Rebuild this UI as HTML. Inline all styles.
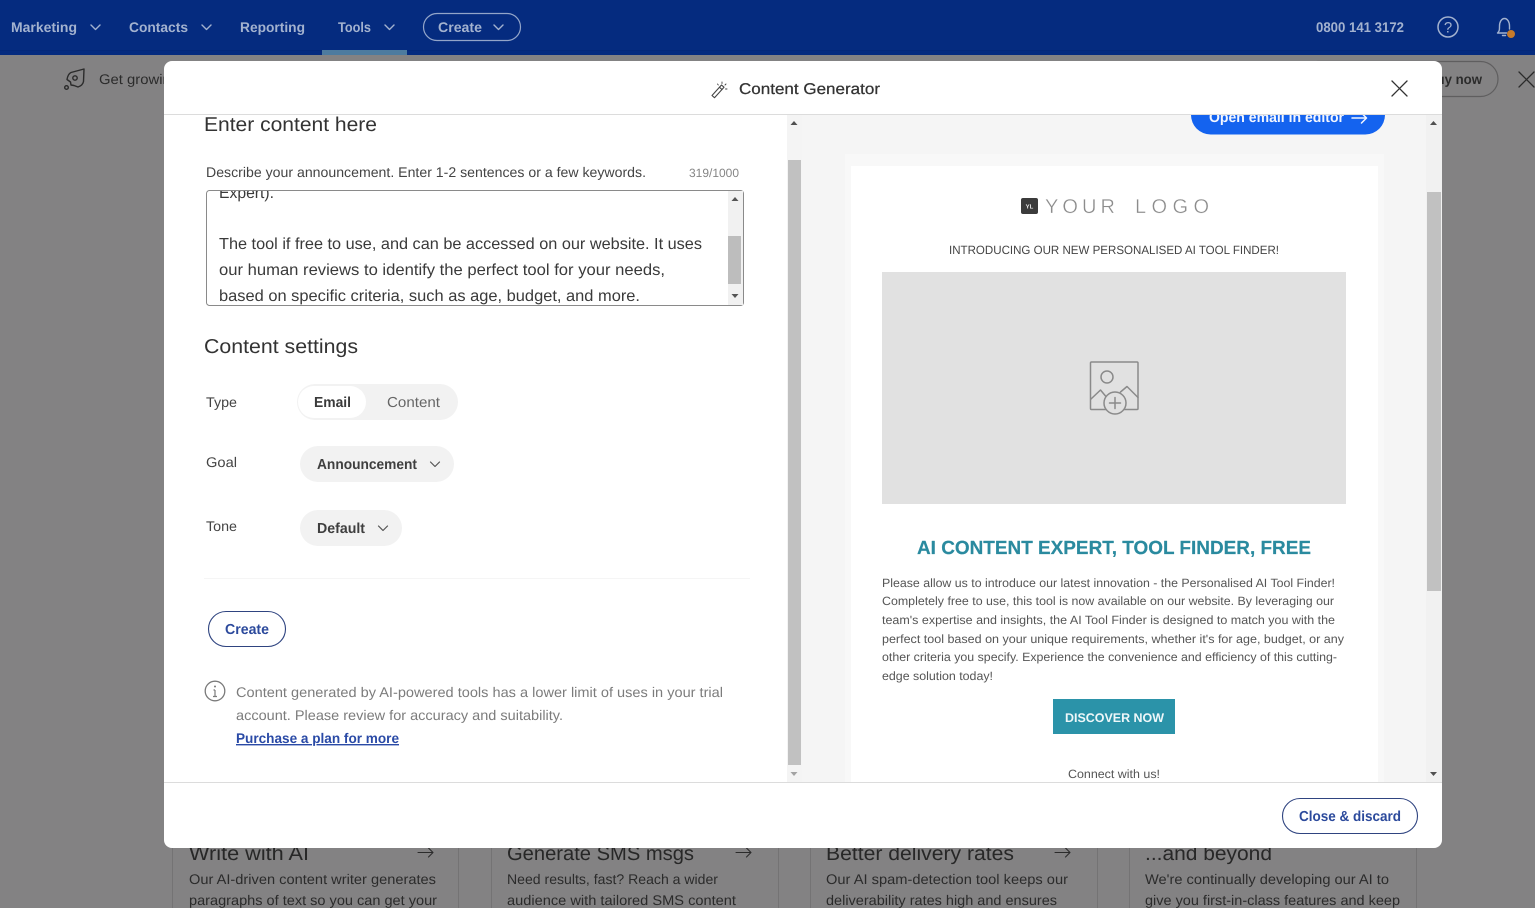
<!DOCTYPE html>
<html lang="en">
<head>
<meta charset="utf-8">
<title>Content Generator</title>
<style>
html,body{margin:0;padding:0;width:1535px;height:908px;overflow:hidden;background:#838283}
svg{display:block;position:absolute;left:0;top:0}
text{font-family:"Liberation Sans",sans-serif;text-rendering:geometricPrecision}
.nav{font-size:14px;font-weight:700;fill:#a3b2cf}
.bg{font-size:14px;fill:#2b2b2b}
.bgt{font-size:20px;fill:#272727}
.h{font-size:20px;fill:#333}
.lab{font-size:14px;fill:#444}
.ta{font-size:16px;fill:#3a3a3a}
.em{font-size:12px;fill:#555}
.ln{fill:none;stroke-linecap:round;stroke-linejoin:round}
</style>
</head>
<body>
<svg width="1535" height="908" viewBox="0 0 1535 908" xmlns="http://www.w3.org/2000/svg">
<defs>
<clipPath id="mc"><rect x="164" y="115" width="1278" height="667"/></clipPath>
<clipPath id="tc"><rect x="207" y="191" width="521" height="114"/></clipPath>
</defs>

<!-- backdrop -->
<rect width="1535" height="908" fill="#838283"/>

<!-- nav -->
<rect width="1535" height="55" fill="#052b7f"/>
<rect y="50" width="1535" height="1" fill="#04287a"/>
<rect x="322" y="50" width="85" height="5" fill="#4d7b9f"/>
<text class="nav" x="11" y="32" textLength="66" lengthAdjust="spacingAndGlyphs">Marketing</text>
<text class="nav" x="129" y="32" textLength="59" lengthAdjust="spacingAndGlyphs">Contacts</text>
<text class="nav" x="240" y="32" textLength="65" lengthAdjust="spacingAndGlyphs">Reporting</text>
<text class="nav" x="338" y="32" textLength="33" lengthAdjust="spacingAndGlyphs">Tools</text>
<path class="ln" d="M91 25l4.500 4.500 4.500-4.500M202 25l4.500 4.500 4.500-4.500M385 25l4.500 4.500 4.500-4.500M494 25l4.500 4.500 4.500-4.500" stroke="#a3b2cf" stroke-width="1.400"/>
<rect x="423.500" y="13.500" width="97" height="27" rx="13.500" fill="none" stroke="#93a5c9" stroke-width="1.200"/>
<text class="nav" x="438" y="32" textLength="44" lengthAdjust="spacingAndGlyphs">Create</text>
<text class="nav" x="1316" y="32" textLength="88" lengthAdjust="spacingAndGlyphs">0800 141 3172</text>
<circle cx="1448" cy="27" r="10" fill="none" stroke="#a3b2cf" stroke-width="1.500"/>
<text x="1448" y="32.500" text-anchor="middle" style="font-size:15px;fill:#a3b2cf">?</text>
<path class="ln" d="M1498 32.500c1.500-1.500 1.500-3 1.500-6.500 0-4 2-7.500 5-7.500s5 3.500 5 7.500v3M1497.500 33h9M1502.500 35.500h3" stroke="#a3b2cf" stroke-width="1.400"/>
<circle cx="1511" cy="34" r="4" fill="#c67a2b"/>

<!-- banner -->
<g class="ln" stroke="#2b2b2b" stroke-width="1.400">
<path d="M84 69l-13 3.500c-2 1-3.500 4-4 7l3.500 2.500.5 3 3 .5 4 1.500c3-1 5-3 5.500-5.500z"/>
<circle cx="75" cy="78" r="2.200"/>
<circle cx="66.500" cy="87.500" r="1.800"/>
</g>
<text class="bg" x="99" y="84" textLength="80" lengthAdjust="spacingAndGlyphs">Get growing</text>
<rect x="1300" y="61.500" width="198" height="35" rx="17.500" fill="none" stroke="#5f5e5f" stroke-width="1.200"/>
<text x="1427" y="84" style="font-size:14px;font-weight:700;fill:#2b2b2b" textLength="55" lengthAdjust="spacingAndGlyphs">Buy now</text>
<path class="ln" d="M1519 72l15 15M1534 72l-15 15" stroke="#2b2b2b" stroke-width="1.300"/>

<!-- cards behind -->
<g fill="none" stroke="#747374" stroke-width="1">
<rect x="172.500" y="830" width="286" height="100"/>
<rect x="491.500" y="830" width="287" height="100"/>
<rect x="810.500" y="830" width="287" height="100"/>
<rect x="1129.500" y="830" width="287" height="100"/>
</g>
<text class="bgt" x="189" y="860" textLength="120" lengthAdjust="spacingAndGlyphs">Write with AI</text>
<text class="bgt" x="507" y="860" textLength="187" lengthAdjust="spacingAndGlyphs">Generate SMS msgs</text>
<text class="bgt" x="826" y="860" textLength="188" lengthAdjust="spacingAndGlyphs">Better delivery rates</text>
<text class="bgt" x="1145" y="860" textLength="127" lengthAdjust="spacingAndGlyphs">...and beyond</text>
<path class="ln" d="M418 852.500h15M428.500 848l4.500 4.500-4.500 4.500M736 852.500h15M746.500 848l4.500 4.500-4.500 4.500M1055 852.500h15M1065.500 848l4.500 4.500-4.500 4.500" stroke="#2b2b2b" stroke-width="1.100"/>
<text class="bg" x="189" y="884" textLength="247" lengthAdjust="spacingAndGlyphs">Our AI-driven content writer generates</text>
<text class="bg" x="189" y="905" textLength="248" lengthAdjust="spacingAndGlyphs">paragraphs of text so you can get your</text>
<text class="bg" x="507" y="884" textLength="211" lengthAdjust="spacingAndGlyphs">Need results, fast? Reach a wider</text>
<text class="bg" x="507" y="905" textLength="229" lengthAdjust="spacingAndGlyphs">audience with tailored SMS content</text>
<text class="bg" x="826" y="884" textLength="242" lengthAdjust="spacingAndGlyphs">Our AI spam-detection tool keeps our</text>
<text class="bg" x="826" y="905" textLength="231" lengthAdjust="spacingAndGlyphs">deliverability rates high and ensures</text>
<text class="bg" x="1145" y="884" textLength="244" lengthAdjust="spacingAndGlyphs">We're continually developing our AI to</text>
<text class="bg" x="1145" y="905" textLength="255" lengthAdjust="spacingAndGlyphs">give you first-in-class features and keep</text>

<!-- modal -->
<rect x="164" y="61" width="1278" height="787" rx="8" fill="#fff"/>
<rect x="164" y="114" width="1278" height="1" fill="#dcdcdc"/>
<rect x="164" y="782" width="1278" height="1" fill="#dcdcdc"/>

<!-- modal header -->
<g class="ln" stroke="#444" stroke-width="1.100">
<path d="M712 95.500l9.500-10.500 2.500 2.200-9.500 10.500z"/>
<path d="M719.500 87.300l2.500 2.200"/>
<path d="M722 82v1.500M726 84l-1 1M727 89h-1.500M717.500 84l.8 1" stroke-width=".9"/>
</g>
<text x="739" y="94" style="font-size:15.500px;fill:#333;font-weight:400" stroke="#333" stroke-width=".25" textLength="141" lengthAdjust="spacingAndGlyphs">Content Generator</text>
<path class="ln" d="M1392 81l15 15M1407 81l-15 15" stroke="#333" stroke-width="1.300"/>

<g clip-path="url(#mc)">
<!-- left panel -->
<text class="h" x="204" y="131" textLength="173" lengthAdjust="spacingAndGlyphs">Enter content here</text>
<text class="lab" x="206" y="177" textLength="440" lengthAdjust="spacingAndGlyphs">Describe your announcement. Enter 1-2 sentences or a few keywords.</text>
<text x="689" y="177" style="font-size:12px;fill:#858585" textLength="50" lengthAdjust="spacingAndGlyphs">319/1000</text>

<rect x="206.500" y="190.500" width="537" height="115" rx="3" fill="#fff" stroke="#8a8a8a"/>
<g clip-path="url(#tc)">
<text class="ta" x="219" y="198" textLength="55" lengthAdjust="spacingAndGlyphs">Expert).</text>
<text class="ta" x="219" y="249" textLength="483" lengthAdjust="spacingAndGlyphs">The tool if free to use, and can be accessed on our website. It uses</text>
<text class="ta" x="219" y="275" textLength="446" lengthAdjust="spacingAndGlyphs">our human reviews to identify the perfect tool for your needs,</text>
<text class="ta" x="219" y="301" textLength="421" lengthAdjust="spacingAndGlyphs">based on specific criteria, such as age, budget, and more.</text>
</g>
<rect x="728" y="191" width="15" height="114" fill="#f1f1f1"/>
<rect x="728" y="236" width="13" height="48" fill="#bdbdbd"/>
<path d="M735 197l3.500 4h-7zM735 298l3.500-4h-7z" fill="#555"/>

<text class="h" x="204" y="353" textLength="154" lengthAdjust="spacingAndGlyphs">Content settings</text>

<text class="lab" x="206" y="407" textLength="31" lengthAdjust="spacingAndGlyphs">Type</text>
<rect x="297" y="384" width="161" height="36" rx="18" fill="#f2f2f2"/>
<rect x="298" y="386" width="68" height="32" rx="16" fill="#fff"/>
<text x="314" y="407" style="font-size:14.500px;font-weight:700;fill:#3a3a3a" textLength="37" lengthAdjust="spacingAndGlyphs">Email</text>
<text x="387" y="407" style="font-size:14.500px;fill:#666" textLength="53" lengthAdjust="spacingAndGlyphs">Content</text>

<text class="lab" x="206" y="467" textLength="31" lengthAdjust="spacingAndGlyphs">Goal</text>
<rect x="300" y="446" width="154" height="36" rx="18" fill="#f2f2f2"/>
<text x="317" y="469" style="font-size:14.500px;font-weight:700;fill:#3f3f3f" textLength="100" lengthAdjust="spacingAndGlyphs">Announcement</text>
<path class="ln" d="M430.500 462l4.500 4.500 4.500-4.500" stroke="#555" stroke-width="1.200"/>

<text class="lab" x="206" y="531" textLength="31" lengthAdjust="spacingAndGlyphs">Tone</text>
<rect x="300" y="510" width="102" height="36" rx="18" fill="#f2f2f2"/>
<text x="317" y="533" style="font-size:14.500px;font-weight:700;fill:#3f3f3f" textLength="48" lengthAdjust="spacingAndGlyphs">Default</text>
<path class="ln" d="M378.500 526l4.500 4.500 4.500-4.500" stroke="#555" stroke-width="1.200"/>

<rect x="204" y="578" width="546" height="1" fill="#f5f5f5"/>

<rect x="208.500" y="611.500" width="77" height="35" rx="17.500" fill="#fff" stroke="#2f4480" stroke-width="1.100"/>
<text x="225" y="634" style="font-size:14.500px;font-weight:700;fill:#2c4a9c" textLength="44" lengthAdjust="spacingAndGlyphs">Create</text>

<circle cx="215" cy="691" r="9.800" fill="none" stroke="#7a7a7a" stroke-width="1.300"/>
<path d="M215 690v6.500M213 696.500h4M213.500 690h1.500" fill="none" stroke="#7a7a7a" stroke-width="1.200"/>
<circle cx="215" cy="686.500" r="1" fill="#7a7a7a"/>
<text x="236" y="697" style="font-size:14px;fill:#7c7c7c" textLength="487" lengthAdjust="spacingAndGlyphs">Content generated by AI-powered tools has a lower limit of uses in your trial</text>
<text x="236" y="720" style="font-size:14px;fill:#7c7c7c" textLength="327" lengthAdjust="spacingAndGlyphs">account. Please review for accuracy and suitability.</text>
<text x="236" y="743" style="font-size:14px;font-weight:700;fill:#2a4aa6" text-decoration="underline" textLength="163" lengthAdjust="spacingAndGlyphs">Purchase a plan for more</text>

<!-- left scrollbar -->
<rect x="787" y="115" width="15" height="667" fill="#f4f4f4"/>
<rect x="788" y="160" width="13" height="605" fill="#c1c1c1"/>
<path d="M794 121l3.500 4h-7z" fill="#505050"/>
<path d="M794 776l3.500-4h-7z" fill="#a3a3a3"/>

<!-- right panel -->
<rect x="802" y="115" width="640" height="667" fill="#f5f5f5"/>
<rect x="845" y="154" width="539" height="628" fill="#f8f8f8"/>
<rect x="851" y="166" width="527" height="616" fill="#fff"/>

<rect x="1191" y="95" width="194" height="39.500" rx="19.700" fill="#1463ef"/>
<text x="1209" y="122" style="font-size:14.500px;font-weight:700;fill:#f2f6ff" textLength="135" lengthAdjust="spacingAndGlyphs">Open email in editor</text>
<path class="ln" d="M1352 118h14.500M1361.500 113l5 5-5 5" stroke="#f2f6ff" stroke-width="1.500"/>

<!-- email -->
<rect x="1021" y="198" width="17" height="16" rx="2" fill="#3b3b3b"/>
<text x="1029.500" y="208.500" text-anchor="middle" style="font-size:6px;font-weight:700;fill:#eee">YL</text>
<text x="1045" y="213" style="font-size:20px;fill:#8c8c8c" stroke="#fff" stroke-width=".35" textLength="70" lengthAdjust="spacing">YOUR</text>
<text x="1135" y="213" style="font-size:20px;fill:#8c8c8c" stroke="#fff" stroke-width=".35" textLength="74" lengthAdjust="spacing">LOGO</text>
<text x="949" y="254" style="font-size:12px;fill:#444" textLength="330" lengthAdjust="spacingAndGlyphs">INTRODUCING OUR NEW PERSONALISED AI TOOL FINDER!</text>

<rect x="882" y="272" width="464" height="232" fill="#e1e1e1"/>
<g class="ln" stroke="#8a8a8a" stroke-width="1.500" fill="none">
<rect x="1090.500" y="362" width="47.500" height="47.500" rx="1"/>
<circle cx="1107" cy="377" r="6"/>
<path d="M1091 399l9.500-9 5 6M1120.500 392l6.500-5.500 11 11"/>
<circle cx="1115" cy="403" r="11" fill="#e1e1e1"/>
<path d="M1115 397.500v11M1109.500 403h11"/>
</g>

<text x="917" y="554" style="font-size:19px;font-weight:700;fill:#2a8a9f" stroke="#2a8a9f" stroke-width=".2" textLength="394" lengthAdjust="spacingAndGlyphs">AI CONTENT EXPERT, TOOL FINDER, FREE</text>
<text class="em" x="882" y="587" textLength="453" lengthAdjust="spacingAndGlyphs">Please allow us to introduce our latest innovation - the Personalised AI Tool Finder!</text>
<text class="em" x="882" y="605" textLength="452" lengthAdjust="spacingAndGlyphs">Completely free to use, this tool is now available on our website. By leveraging our</text>
<text class="em" x="882" y="624" textLength="453" lengthAdjust="spacingAndGlyphs">team's expertise and insights, the AI Tool Finder is designed to match you with the</text>
<text class="em" x="882" y="643" textLength="462" lengthAdjust="spacingAndGlyphs">perfect tool based on your unique requirements, whether it's for age, budget, or any</text>
<text class="em" x="882" y="661" textLength="455" lengthAdjust="spacingAndGlyphs">other criteria you specify. Experience the convenience and efficiency of this cutting-</text>
<text class="em" x="882" y="680" textLength="111" lengthAdjust="spacingAndGlyphs">edge solution today!</text>
<rect x="1053" y="699" width="122" height="35" fill="#2b93a9"/>
<text x="1065" y="722" style="font-size:12.500px;font-weight:700;fill:#eef7f9" textLength="99" lengthAdjust="spacingAndGlyphs">DISCOVER NOW</text>
<text class="em" x="1068" y="778" textLength="92" lengthAdjust="spacingAndGlyphs">Connect with us!</text>

<!-- right scrollbar -->
<rect x="1426" y="115" width="16" height="667" fill="#f1f1f1"/>
<rect x="1427" y="192" width="14" height="399" fill="#c1c1c1"/>
<path d="M1433.500 121l3.500 4h-7zM1433.500 776l3.500-4h-7z" fill="#505050"/>
</g>

<!-- footer -->
<rect x="1282.500" y="798.500" width="135" height="35" rx="17.500" fill="#fff" stroke="#2f4480" stroke-width="1.100"/>
<text x="1299" y="821" style="font-size:14.500px;font-weight:700;fill:#2c4a9c" textLength="102" lengthAdjust="spacingAndGlyphs">Close &amp; discard</text>
</svg>
</body>
</html>
